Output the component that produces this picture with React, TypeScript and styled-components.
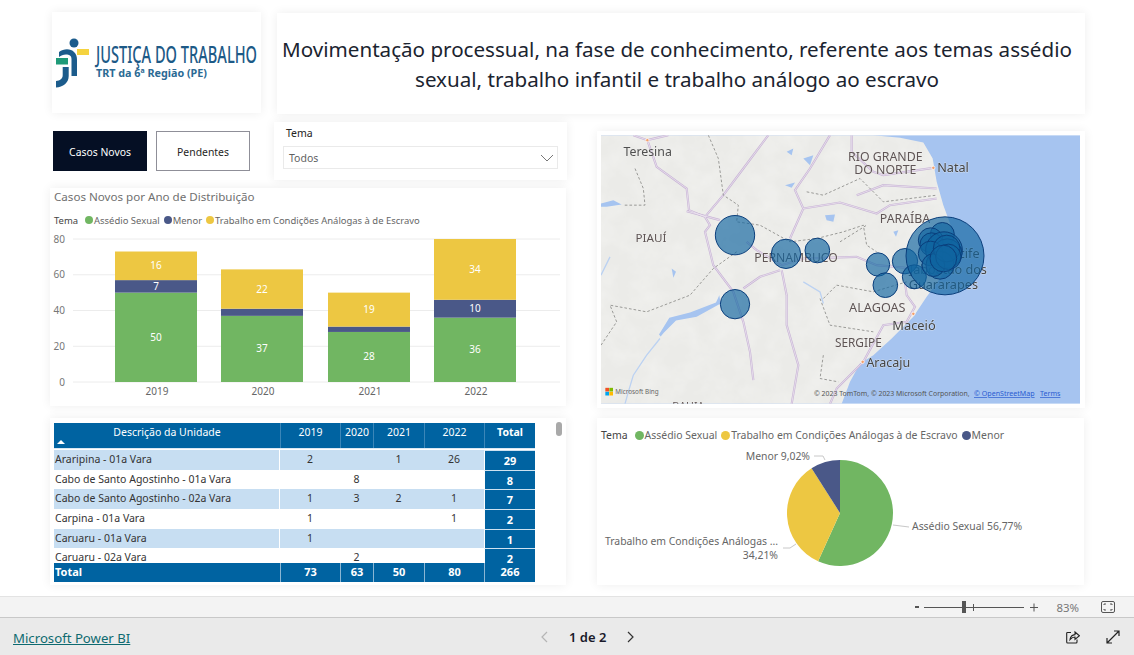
import React from "react";
import styled, { createGlobalStyle } from "styled-components";

const FONT = `"Noto Sans", "Open Sans", "Liberation Sans", sans-serif`;
const GREEN = "#71b662";
const NAVY = "#4a5888";
const YELLOW = "#edc742";
const BLUE = "#0063a1";

const Global = createGlobalStyle`
  html, body { margin: 0; padding: 0; height: 100%; background: #fff; overflow: hidden; }
  #root { height: 655px; width: 1134px; }
  * { box-sizing: border-box; }
`;

const Page = styled.div`
  width: 1134px;
  height: 655px;
  display: flex;
  flex-direction: column;
  font-family: ${FONT};
  color: #252423;
  background: #fff;
`;
const Canvas = styled.main`
  height: 596px;
  display: flex;
  flex-direction: column;
  padding: 12px 0 0 50px;
`;
const TopRow = styled.div`
  display: flex;
  height: 110px;
  padding-left: 2px;
  gap: 16px;
`;
const Columns = styled.div`
  display: grid;
  grid-template-columns: 517px 488px;
  column-gap: 30px;
`;
const Column = styled.div`
  display: flex;
  flex-direction: column;
`;
const Card = styled.section`
  background: #fff;
  box-shadow: 0 0 10px rgba(0, 0, 0, 0.07);
`;
const LogoCard = styled(Card)`
  width: 209px;
  height: 101px;
  display: flex;
  align-items: center;
`;
const TitleCard = styled(Card)`
  width: 808px;
  height: 101px;
  margin-top: 1px;
  display: flex;
  align-items: center;
  justify-content: center;
  text-align: center;
  font-size: 20.6px;
  line-height: 30px;
  color: #1b2430;
  padding: 0 8px 0 0;
`;
const Controls = styled.div`
  display: flex;
  height: 66px;
`;
const Buttons = styled.div`
  display: flex;
  gap: 9px;
  padding: 9px 0 0 3px;
  width: 224px;
`;
const ToggleButton = styled.button<{ $active?: boolean }>`
  width: 94px;
  height: 40px;
  font: 400 10.4px ${FONT};
  padding: 1px 0 0;
  color: ${(p) => (p.$active ? "#fff" : "#252423")};
  background: ${(p) => (p.$active ? "#050f24" : "#fff")};
  border: ${(p) => (p.$active ? "none" : "1px solid #8f8f98")};
`;
const Slicer = styled(Card)`
  width: 293px;
  height: 58px;
  padding: 4px 9px 0;
`;
const SlicerLabel = styled.div`
  font-size: 10.5px;
  line-height: 14px;
  height: 20px;
  padding-left: 3px;
`;
const SlicerBox = styled.div`
  height: 23px;
  border: 1px solid #eaeaea;
  display: flex;
  align-items: center;
  justify-content: space-between;
  font-size: 10.5px;
  color: #5f5f5f;
  padding: 0 3px 0 5px;
`;
const ChartCard = styled(Card)`
  width: 516px;
  height: 218px;
`;
const ChartTitle = styled.div`
  font-size: 11.6px;
  line-height: 17px;
  color: #707070;
  padding: 0 0 0 4px;
`;
const Legend = styled.div<{ $size?: number }>`
  display: flex;
  align-items: center;
  font-size: ${(p) => p.$size ?? 9.45}px;
  line-height: 13px;
  color: #666;
  white-space: nowrap;
`;
const ChartLegend = styled(Legend)`
  padding: 8px 0 0 4px;
  height: 22px;
`;
const LegendTitle = styled.span`
  color: #444;
  margin-right: 7px;
`;
const LegendItem = styled.span<{ $color: string; $size?: number }>`
  display: inline-flex;
  align-items: center;
  margin-right: 4px;
  &::before {
    content: "";
    width: ${(p) => p.$size ?? 8}px;
    height: ${(p) => p.$size ?? 8}px;
    border-radius: 50%;
    background: ${(p) => p.$color};
    margin-right: 1px;
  }
`;
const PlainSvg = styled.svg`
  display: block;
`;
const TableCard = styled(Card)`
  width: 516px;
  height: 167px;
  margin-top: 12px;
  position: relative;
  padding: 5px 0 0 4px;
`;
const Grid = styled.div`
  width: 481px;
  height: 159px;
  display: grid;
  grid-template-rows: 26px 114px 19px;
  font-size: 10.5px;
  overflow: hidden;
`;
const COLS = "226px 60px 33px 51px 60px 51px";
const HeadRow = styled.div`
  display: grid;
  grid-template-columns: ${COLS};
  background: ${BLUE};
  color: #fff;
  line-height: 19px;
  border-bottom: 1px solid #d9e7f2;
`;
const HeadCell = styled.div<{ $bold?: boolean }>`
  text-align: center;
  font-weight: ${(p) => (p.$bold ? 700 : 400)};
  border-left: 1px solid #3b86b8;
  position: relative;
  &:first-child { border-left: none; }
`;
const SortArrow = styled.span`
  position: absolute;
  left: 3px;
  bottom: 4px;
  width: 0;
  height: 0;
  border-left: 4px solid transparent;
  border-right: 4px solid transparent;
  border-bottom: 4px solid #fff;
`;
const Body = styled.div`
  overflow: hidden;
  padding-top: 1px;
`;
const Row = styled.div<{ $stripe?: boolean }>`
  display: grid;
  grid-template-columns: ${COLS};
  height: 19.7px;
  line-height: 19.7px;
  background: ${(p) => (p.$stripe ? "#c7def2" : "#fff")};
  color: #333;
`;
const NameCell = styled.div`
  padding-left: 1px;
  white-space: nowrap;
  border-right: 1px solid #fff;
`;
const NumCell = styled.div`
  text-align: center;
`;
const TotalCell = styled.div`
  background: ${BLUE};
  color: #fff;
  font-weight: 700;
  font-size: 11px;
  text-align: center;
  border-left: 1px solid #fff;
  border-top: 1px solid #cfe2f0;
`;
const FootRow = styled.div`
  display: grid;
  grid-template-columns: ${COLS};
  background: ${BLUE};
  color: #fff;
  font-weight: 700;
  font-size: 11px;
  line-height: 18px;
`;
const FootCell = styled.div`
  text-align: center;
  border-left: 1px solid #8ab6d4;
  &:first-child { text-align: left; padding-left: 1px; border-left: none; }
`;
const ScrollThumb = styled.div`
  position: absolute;
  top: 4px;
  right: 4px;
  width: 6px;
  height: 14px;
  border-radius: 3px;
  background: #a9a9a9;
`;
const MapCard = styled(Card)`
  width: 488px;
  height: 277px;
  margin-top: 9px;
  padding: 4px 5px 4px 4px;
`;
const PieCard = styled(Card)`
  width: 487px;
  height: 167px;
  margin-top: 10px;
`;
const PieLegend = styled(Legend)`
  padding: 11px 0 0 4px;
`;
const ZoomBar = styled.div`
  height: 22px;
  background: #f3f3f3;
  border-top: 1px solid #e3e3e3;
  border-bottom: 1px solid #c8c8c8;
  display: flex;
  align-items: center;
  justify-content: flex-end;
  padding-right: 19px;
  font-size: 11.4px;
  color: #777;
`;
const ZoomPct = styled.span`
  margin: 0 22px 0 18px;
`;
const FooterBar = styled.footer`
  height: 37px;
  background: #eaeaea;
  display: grid;
  grid-template-columns: 527px auto 1fr;
  align-items: center;
  padding: 0 13px;
`;
const PbiLink = styled.a`
  font-size: 13.2px;
  color: #0e6a70;
  text-decoration: underline;
`;
const Pager = styled.div`
  display: flex;
  align-items: center;
  gap: 21px;
  font-size: 13px;
  font-weight: 600;
  color: #1a1a2a;
`;
const FooterIcons = styled.div`
  display: flex;
  justify-content: flex-end;
  align-items: center;
  gap: 26px;
  padding-right: 1px;
`;

const years = [
  { y: "2019", g: 50, n: 7, a: 16, x: 115 },
  { y: "2020", g: 37, n: 4, a: 22, x: 221 },
  { y: "2021", g: 28, n: 3, a: 19, x: 328 },
  { y: "2022", g: 36, n: 10, a: 34, x: 434 },
];

function BarChart() {
  const ox = 50;
  const oy = 188 + 39;
  const base = 382 - oy;
  const k = 143 / 80;
  return (
    <PlainSvg width={516} height={179} viewBox="0 0 516 179" fontFamily={FONT}>
      {[0, 20, 40, 60, 80].map((v) => (
        <g key={v}>
          <line x1={23} x2={510} y1={base - v * k} y2={base - v * k} stroke="#ececec" />
          <text x={15} y={base - v * k + 3.5} textAnchor="end" fontSize={10} fill="#777">{v}</text>
        </g>
      ))}
      {years.map((b) => {
        const x = b.x - ox;
        const gy = base - b.g * k;
        const ny = gy - b.n * k;
        const ay = ny - b.a * k;
        const cx = x + 41;
        return (
          <g key={b.y} fontSize={10} textAnchor="middle">
            <rect x={x} y={gy} width={82} height={b.g * k} fill={GREEN} />
            <rect x={x} y={ny} width={82} height={b.n * k} fill={NAVY} />
            <rect x={x} y={ay} width={82} height={b.a * k} fill={YELLOW} />
            <text x={cx} y={gy + (b.g * k) / 2 + 3.5} fill="#fff">{b.g}</text>
            {b.n >= 7 && <text x={cx} y={ny + (b.n * k) / 2 + 3.5} fill="#fff">{b.n}</text>}
            <text x={cx} y={ay + (b.a * k) / 2 + 3.5} fill="#fff">{b.a}</text>
            <text x={cx + 1} y={base + 13} fill="#666">{b.y}</text>
          </g>
        );
      })}
    </PlainSvg>
  );
}

function polar(cx: number, cy: number, r: number, pct: number) {
  const a = (pct / 100) * 2 * Math.PI;
  return [cx + r * Math.sin(a), cy - r * Math.cos(a)];
}
function slice(cx: number, cy: number, r: number, from: number, to: number) {
  const [x1, y1] = polar(cx, cy, r, from);
  const [x2, y2] = polar(cx, cy, r, to);
  const large = to - from > 50 ? 1 : 0;
  return `M${cx} ${cy}L${x1} ${y1}A${r} ${r} 0 ${large} 1 ${x2} ${y2}Z`;
}

function PieChart() {
  const cx = 243;
  const cy = 71;
  const r = 53;
  return (
    <PlainSvg width={487} height={133} viewBox="0 0 487 133" fontFamily={FONT}>
      <path d={slice(cx, cy, r, 0, 56.77)} fill={GREEN} />
      <path d={slice(cx, cy, r, 56.77, 90.98)} fill={YELLOW} />
      <path d={slice(cx, cy, r, 90.98, 100)} fill={NAVY} />
      <g stroke="#c8c8c8" fill="none">
        <path d="M296 83 L312 85" />
        <path d="M199 102 L193 106 L186 106" />
        <path d="M228 18 L226 14 L217 14" />
      </g>
      <g fontSize={10.4} fill="#666">
        <text x={315} y={88}>Assédio Sexual 56,77%</text>
        <text x={181} y={103} textAnchor="end">Trabalho em Condições Análogas ...</text>
        <text x={181} y={117} textAnchor="end">34,21%</text>
        <text x={213} y={18} textAnchor="end">Menor 9,02%</text>
      </g>
    </PlainSvg>
  );
}

const bubbles: [number, number, number][] = [
  [435, 330, 59], [588, 386, 44], [682, 376, 37], [864, 418, 35], [886, 480, 37],
  [945, 408, 38], [973, 455, 36], [435, 537, 44], [1065, 392, 117], [1057, 328, 36],
  [1022, 345, 37], [1025, 358, 35], [1062, 375, 55], [1072, 385, 44], [1022, 385, 37],
  [1050, 420, 42], [1030, 420, 34], [1070, 370, 40], [1075, 395, 38], [1060, 400, 40],
];

const labels: [string, number, number, number, string?][] = [
  ["Teresina", 173, 93, 37, "#4f4f4f"],
  ["RIO GRANDE", 886, 109, 37],
  ["DO NORTE", 886, 148, 37],
  ["Natal", 1089, 140, 38, "#444"],
  ["PARAÍBA", 945, 293, 37],
  ["PIAUÍ", 183, 352, 35],
  ["PERNAMBUCO", 618, 411, 36.5],
  ["Recife", 1115, 398, 38, "#444"],
  ["Jaboatão dos", 1075, 446, 38, "#444"],
  ["Guararapes", 1060, 491, 38, "#444"],
  ["ALAGOAS", 862, 560, 38],
  ["Maceió", 972, 614, 38.5, "#444"],
  ["SERGIPE", 805, 665, 35.5],
  ["Aracaju", 895, 726, 37.5, "#444"],
  ["BAHIA", 295, 856, 32],
];

const roads = [
  "M130 30 L172 45 L235 30",
  "M172 45 L200 125 L290 190 L297 255 L345 275 L360 300 L345 320 L370 420 L430 500 L460 590 L480 680 L490 765",
  "M345 275 L400 210 L460 130 L535 30",
  "M290 258 L390 285",
  "M470 350 L500 375 L575 420 L640 400 L800 395 L860 420 L970 430 L1050 420",
  "M575 435 L590 510 L590 600 L625 720 L605 836",
  "M570 435 L510 455 L460 490",
  "M600 340 L640 250 L615 195 L660 130 L720 30",
  "M640 250 L750 232 L860 265 L900 240 L1040 220",
  "M785 30 L785 80 L850 140 L880 150 L1030 128",
  "M800 210 L880 180 L1040 190",
  "M945 470 L950 510 L975 545 L950 590 L880 600 L820 710 L740 790 L720 836",
];
const borders = [
  "M355 30 L385 100 L400 210 L445 240 L440 290 L510 300 L600 350 L680 340 L760 320 L820 300 L830 360 L860 380",
  "M135 130 L160 190 L165 240 L100 240",
  "M33 660 L80 590 L60 540 L170 560 L300 510 L370 430 L440 380",
  "M650 200 L700 210 L810 160 L880 230 L1040 210",
  "M700 520 L740 480 L850 500 L950 470",
  "M690 520 L720 600 L850 620",
  "M700 690 L690 760 L745 770",
  "M750 350 L830 300",
];
const COAST = "M33 30 L850 30 L930 38 L1000 52 L1028 100 L1040 170 L1060 240 L1082 300 L1085 400 L1050 460 L1010 515 L970 575 L905 640 L850 690 L810 715 L780 770 L755 836 L33 836Z";

function MapView() {
  return (
    <PlainSvg width={479} height={269} viewBox="33 30 1437 806" fontFamily={FONT}>
      <defs>
        <filter id="soft"><feGaussianBlur stdDeviation="1.3" /></filter>
        <filter id="softer"><feGaussianBlur stdDeviation="0.7" /></filter>
        <filter id="terrain" x="0" y="0" width="100%" height="100%">
          <feTurbulence type="fractalNoise" baseFrequency="0.014" numOctaves="4" seed="7" />
          <feColorMatrix values="0 0 0 0 1  0 0 0 0 1  0 0 0 0 0.99  0.55 0 0 0 -0.2" />
          <feComposite in2="SourceAlpha" operator="in" />
        </filter>
        <clipPath id="frame"><rect x={33} y={30} width={1437} height={806} /></clipPath>
      </defs>
      <g clipPath="url(#frame)">
        <rect x={33} y={30} width={1437} height={806} fill="#a6c4f0" />
        <path d={COAST} fill="#ebebe8" />
        <path d={COAST} fill="#000" filter="url(#terrain)" />
        <g filter="url(#soft)">
          <g fill="#a6c4f0">
            <path d="M33 235 L70 225 L95 238 L50 245 L33 245Z" />
            <path d="M207 628 L238 578 L300 562 L378 532 L388 510 L392 535 L320 575 L258 586 L222 622 L212 634Z" />
            <path d="M705 270 L735 268 L730 290 L710 285Z" />
            <path d="M640 100 L670 90 L660 120Z" />
            <path d="M585 180 L615 172 L605 188Z" />
            <path d="M245 430 L258 440 L250 458Z" />
            <path d="M910 320 L925 315 L918 335Z" />
            <path d="M590 80 L610 70 L605 90Z" />
          </g>
          <path
            d="M210 640 L170 690 L130 750 L115 800 L105 836 M33 450 L60 395 M640 470 L690 500 L700 535"
            fill="none" stroke="#bcd2f2" strokeWidth="4"
          />
          <g fill="none" stroke="#c9b5d6" strokeWidth="6.5">
            {roads.map((d) => <path key={d} d={d} />)}
          </g>
          <g fill="none" stroke="#f3eff5" strokeWidth="2">
            {roads.map((d) => <path key={d} d={d} />)}
          </g>
          <g fill="none" stroke="#9a9a97" strokeWidth="3" strokeDasharray="8 6">
            {borders.map((d) => <path key={d} d={d} />)}
          </g>
        </g>
        {[[172, 45], [1030, 128], [970, 566], [818, 710]].map(([x, y]) => (
          <circle key={x} cx={x} cy={y} r={5} fill="#f3a06c" stroke="#fff" strokeWidth={2} />
        ))}
        <g filter="url(#softer)" textAnchor="middle" stroke="#f3f3f1" strokeWidth={3} paintOrder="stroke" strokeOpacity={0.5}>
          {labels.map(([t, x, y, s, c]) => (
            <text key={t} x={x} y={y} fontSize={s} fill={c ?? "#5f5555"}>{t}</text>
          ))}
        </g>
        {bubbles.map(([x, y, r], i) => (
          <circle key={i} cx={x} cy={y} r={r} fill="#0f64a0" fillOpacity={0.66} stroke="#0b3f7c" strokeWidth={3} />
        ))}
        <g>
          <rect x={46} y={788} width={11} height={11} fill="#f25022" />
          <rect x={58} y={788} width={11} height={11} fill="#7fba00" />
          <rect x={46} y={800} width={11} height={11} fill="#00a4ef" />
          <rect x={58} y={800} width={11} height={11} fill="#ffb900" />
          <text x={76} y={806} fontSize={19} fill="#666">Microsoft Bing</text>
        </g>
        <text x={672} y={813} fontSize={20.8} fill="#555">© 2023 TomTom, © 2023 Microsoft Corporation,</text>
        <text x={1152} y={813} fontSize={21.3} fill="#2a5bd0" textDecoration="underline">© OpenStreetMap</text>
        <text x={1350} y={813} fontSize={21.3} fill="#2a5bd0" textDecoration="underline">Terms</text>
      </g>
    </PlainSvg>
  );
}

function Logo() {
  return (
    <PlainSvg width={209} height={101} viewBox="0 0 209 101" fontFamily={FONT}>
      <circle cx={22} cy={31} r={4.5} fill="#1c5c8c" />
      <path d="M7 40 C12 36 19 36.5 22 40 C24.5 42 25 45 25 48 L25 64 L19.5 64 L19.5 47 C19.5 43.5 17 42.5 14 42.5 C11 42.5 9 43.5 7 45 Z" fill="#1c5c8c" />
      <rect x={25} y={37} width={12} height={6} fill="#f5d33f" />
      <rect x={4} y={46} width={12} height={6.5} fill="#1f9a78" />
      <path d="M10.7 55 L16.7 55 L16.7 64 C16.7 71 11 75 4 75.5 L4 69 C8 68.5 10.7 67 10.7 63 Z" fill="#1c5c8c" />
      <text x={44} y={51} fontSize={24} fontWeight={500} fill="#1d5a87" textLength={161} lengthAdjust="spacingAndGlyphs">JUSTIÇA DO TRABALHO</text>
      <text x={44} y={65} fontSize={10.5} fontWeight={700} fill="#2b6a94" textLength={111} lengthAdjust="spacingAndGlyphs">TRT da 6ª Região (PE)</text>
    </PlainSvg>
  );
}

const rows = [
  ["Araripina - 01a Vara", "2", "", "1", "26", "29"],
  ["Cabo de Santo Agostinho - 01a Vara", "", "8", "", "", "8"],
  ["Cabo de Santo Agostinho - 02a Vara", "1", "3", "2", "1", "7"],
  ["Carpina - 01a Vara", "1", "", "", "1", "2"],
  ["Caruaru - 01a Vara", "1", "", "", "", "1"],
  ["Caruaru - 02a Vara", "", "2", "", "", "2"],
];

export default function App() {
  return (
    <Page>
      <Global />
      <Canvas>
        <TopRow>
          <LogoCard><Logo /></LogoCard>
          <TitleCard>Movimentação processual, na fase de conhecimento, referente aos temas assédio sexual, trabalho infantil e trabalho análogo ao escravo</TitleCard>
        </TopRow>
        <Columns>
          <Column>
            <Controls>
              <Buttons>
                <ToggleButton $active>Casos Novos</ToggleButton>
                <ToggleButton>Pendentes</ToggleButton>
              </Buttons>
              <Slicer>
                <SlicerLabel>Tema</SlicerLabel>
                <SlicerBox>
                  Todos
                  <svg width="14" height="8" viewBox="0 0 14 8" fill="none" stroke="#777"><path d="M1 1 L7 7 L13 1" /></svg>
                </SlicerBox>
              </Slicer>
            </Controls>
            <ChartCard>
              <ChartTitle>Casos Novos por Ano de Distribuição</ChartTitle>
              <ChartLegend>
                <LegendTitle>Tema</LegendTitle>
                <LegendItem $color={GREEN}>Assédio Sexual</LegendItem>
                <LegendItem $color={NAVY}>Menor</LegendItem>
                <LegendItem $color={YELLOW}>Trabalho em Condições Análogas à de Escravo</LegendItem>
              </ChartLegend>
              <BarChart />
            </ChartCard>
            <TableCard>
              <Grid>
                <HeadRow>
                  <HeadCell>Descrição da Unidade<SortArrow /></HeadCell>
                  <HeadCell>2019</HeadCell>
                  <HeadCell>2020</HeadCell>
                  <HeadCell>2021</HeadCell>
                  <HeadCell>2022</HeadCell>
                  <HeadCell $bold>Total</HeadCell>
                </HeadRow>
                <Body>
                  {rows.map((r, i) => (
                    <Row key={r[0]} $stripe={i % 2 === 0}>
                      <NameCell>{r[0]}</NameCell>
                      <NumCell>{r[1]}</NumCell>
                      <NumCell>{r[2]}</NumCell>
                      <NumCell>{r[3]}</NumCell>
                      <NumCell>{r[4]}</NumCell>
                      <TotalCell>{r[5]}</TotalCell>
                    </Row>
                  ))}
                </Body>
                <FootRow>
                  {["Total", "73", "63", "50", "80", "266"].map((t) => (
                    <FootCell key={t}>{t}</FootCell>
                  ))}
                </FootRow>
              </Grid>
              <ScrollThumb />
            </TableCard>
          </Column>
          <Column>
            <MapCard><MapView /></MapCard>
            <PieCard>
              <PieLegend $size={10.45}>
                <LegendTitle>Tema</LegendTitle>
                <LegendItem $color={GREEN} $size={9}>Assédio Sexual</LegendItem>
                <LegendItem $color={YELLOW} $size={9}>Trabalho em Condições Análogas à de Escravo</LegendItem>
                <LegendItem $color={NAVY} $size={9}>Menor</LegendItem>
              </PieLegend>
              <PieChart />
            </PieCard>
          </Column>
        </Columns>
      </Canvas>
      <ZoomBar>
        <svg width="124" height="12" viewBox="0 0 124 12" stroke="#555" fill="none">
          <rect x="0" y="5" width="4" height="2" fill="#555" stroke="none" />
          <line x1="9" x2="109" y1="6.5" y2="6.5" />
          <rect x="47" y="0" width="4" height="12" fill="#555" stroke="none" />
          <line x1="58.5" x2="58.5" y1="3" y2="10" />
          <path d="M115 6.5H123M119 2.5V10.5" />
        </svg>
        <ZoomPct>83%</ZoomPct>
        <svg width="14" height="12" viewBox="0 0 14 12" fill="none" stroke="#555">
          <rect x="0.5" y="0.5" width="13" height="11" rx="1.5" />
          <path d="M3 4V3H5M9 3H11V4M3 8V9H5M9 9H11V8" />
        </svg>
      </ZoomBar>
      <FooterBar>
        <div><PbiLink href="#">Microsoft Power BI</PbiLink></div>
        <Pager>
          <svg width="8" height="12" viewBox="0 0 8 12" fill="none" stroke="#b5b5b5" strokeWidth="1.2"><path d="M7 1 L2 6 L7 11" /></svg>
          <span>1 de 2</span>
          <svg width="8" height="12" viewBox="0 0 8 12" fill="none" stroke="#333" strokeWidth="1.2"><path d="M1 1 L6 6 L1 11" /></svg>
        </Pager>
        <FooterIcons>
          <svg width="14" height="14" viewBox="0 0 14 14" fill="none" stroke="#222" strokeWidth="1.1">
            <path d="M5 2.5H1.5C1 2.5 .7 2.8 .7 3.3V12C.7 12.6 1 13 1.6 13H10C10.6 13 11 12.6 11 12V9.5" />
            <path d="M4 9.5C4.5 6.5 6.5 4.8 9 4.6V2L13.4 5.8L9 9.4V7C7 7 5.4 8 4 9.5Z" />
          </svg>
          <svg width="14" height="14" viewBox="0 0 14 14" fill="none" stroke="#222" strokeWidth="1.2">
            <path d="M8 1H13V6M13 1L1 13M1 8V13H6" />
          </svg>
        </FooterIcons>
      </FooterBar>
    </Page>
  );
}
